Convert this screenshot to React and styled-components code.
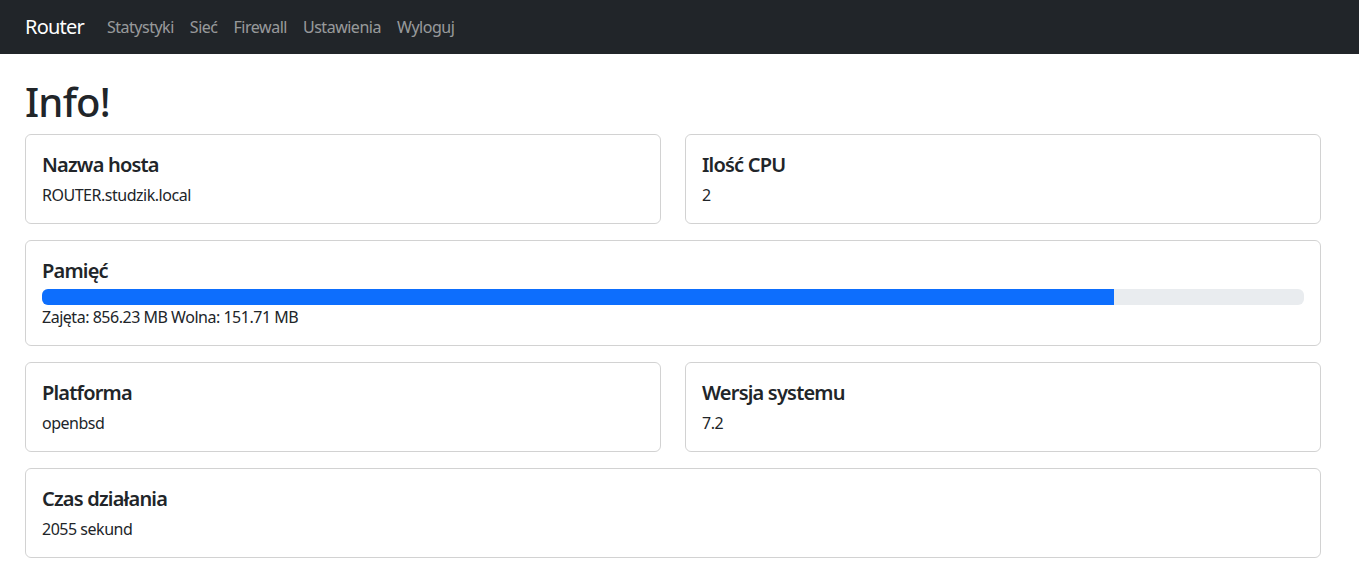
import styled, { createGlobalStyle } from "styled-components";

const GlobalStyle = createGlobalStyle`
  * { box-sizing: border-box; }
  body {
    margin: 0;
    font-family: "Segoe UI", "Noto Sans", "Open Sans", sans-serif;
    font-size: 16px;
    line-height: 1.5;
    letter-spacing: -0.03em;
    color: #212529;
    background: #fff;
  }
`;

const Nav = styled.nav`
  height: 54px;
  background: #212529;
  display: flex;
  align-items: center;
  padding: 0 25px;
`;

const Brand = styled.a`
  color: #fff;
  font-size: 20px;
  line-height: 30px;
  margin-right: 15px;
  letter-spacing: -0.04em;
  text-decoration: none;
`;

const NavLinks = styled.ul`
  display: flex;
  list-style: none;
  margin: 0;
  padding: 0;
`;

const NavItem = styled.a`
  display: block;
  padding: 8px;
  color: rgba(255, 255, 255, 0.55);
  text-decoration: none;
  letter-spacing: -0.03em;
`;

const Main = styled.main`
  width: 1296px;
  margin-left: 25px;
`;

const Title = styled.h1`
  font-size: 40px;
  font-weight: 500;
  line-height: 1.2;
  margin: 24px 0 8px;
  letter-spacing: -0.02em;
`;

const Grid = styled.div`
  display: grid;
  grid-template-columns: 1fr 1fr;
  column-gap: 24px;
  row-gap: 16px;
`;

const Card = styled.div`
  grid-column: ${(p) => (p.$wide ? "1 / -1" : "auto")};
  border: 1px solid rgba(0, 0, 0, 0.175);
  border-radius: 6px;
  padding: 16px;
`;

const CardTitle = styled.h5`
  margin: 0 0 6px;
  padding-top: 2px;
  font-size: 20px;
  font-weight: 600;
  line-height: 24px;
  letter-spacing: -0.04em;
`;

const CardText = styled.p`
  margin: 0;
`;

const Progress = styled.div`
  height: 16px;
  background: #e9ecef;
  border-radius: 6px;
  overflow: hidden;
  display: flex;
`;

const Bar = styled.div`
  background: #0d6efd;
  height: 100%;
`;

const links = ["Statystyki", "Sieć", "Firewall", "Ustawienia", "Wyloguj"];

export default function App() {
  const used = 856.23;
  const free = 151.71;
  const pct = (used / (used + free)) * 100;
  return (
    <>
      <GlobalStyle />
      <Nav>
        <Brand href="#">Router</Brand>
        <NavLinks>
          {links.map((l) => (
            <li key={l}>
              <NavItem href="#">{l}</NavItem>
            </li>
          ))}
        </NavLinks>
      </Nav>
      <Main>
        <Title>Info!</Title>
        <Grid>
          <Card>
            <CardTitle>Nazwa hosta</CardTitle>
            <CardText>ROUTER.studzik.local</CardText>
          </Card>
          <Card>
            <CardTitle>Ilość CPU</CardTitle>
            <CardText>2</CardText>
          </Card>
          <Card $wide>
            <CardTitle>Pamięć</CardTitle>
            <Progress>
              <Bar style={{ width: `${pct}%` }} />
            </Progress>
            <CardText>Zajęta: 856.23 MB Wolna: 151.71 MB</CardText>
          </Card>
          <Card>
            <CardTitle>Platforma</CardTitle>
            <CardText>openbsd</CardText>
          </Card>
          <Card>
            <CardTitle>Wersja systemu</CardTitle>
            <CardText>7.2</CardText>
          </Card>
          <Card $wide>
            <CardTitle>Czas działania</CardTitle>
            <CardText>2055 sekund</CardText>
          </Card>
        </Grid>
      </Main>
    </>
  );
}
